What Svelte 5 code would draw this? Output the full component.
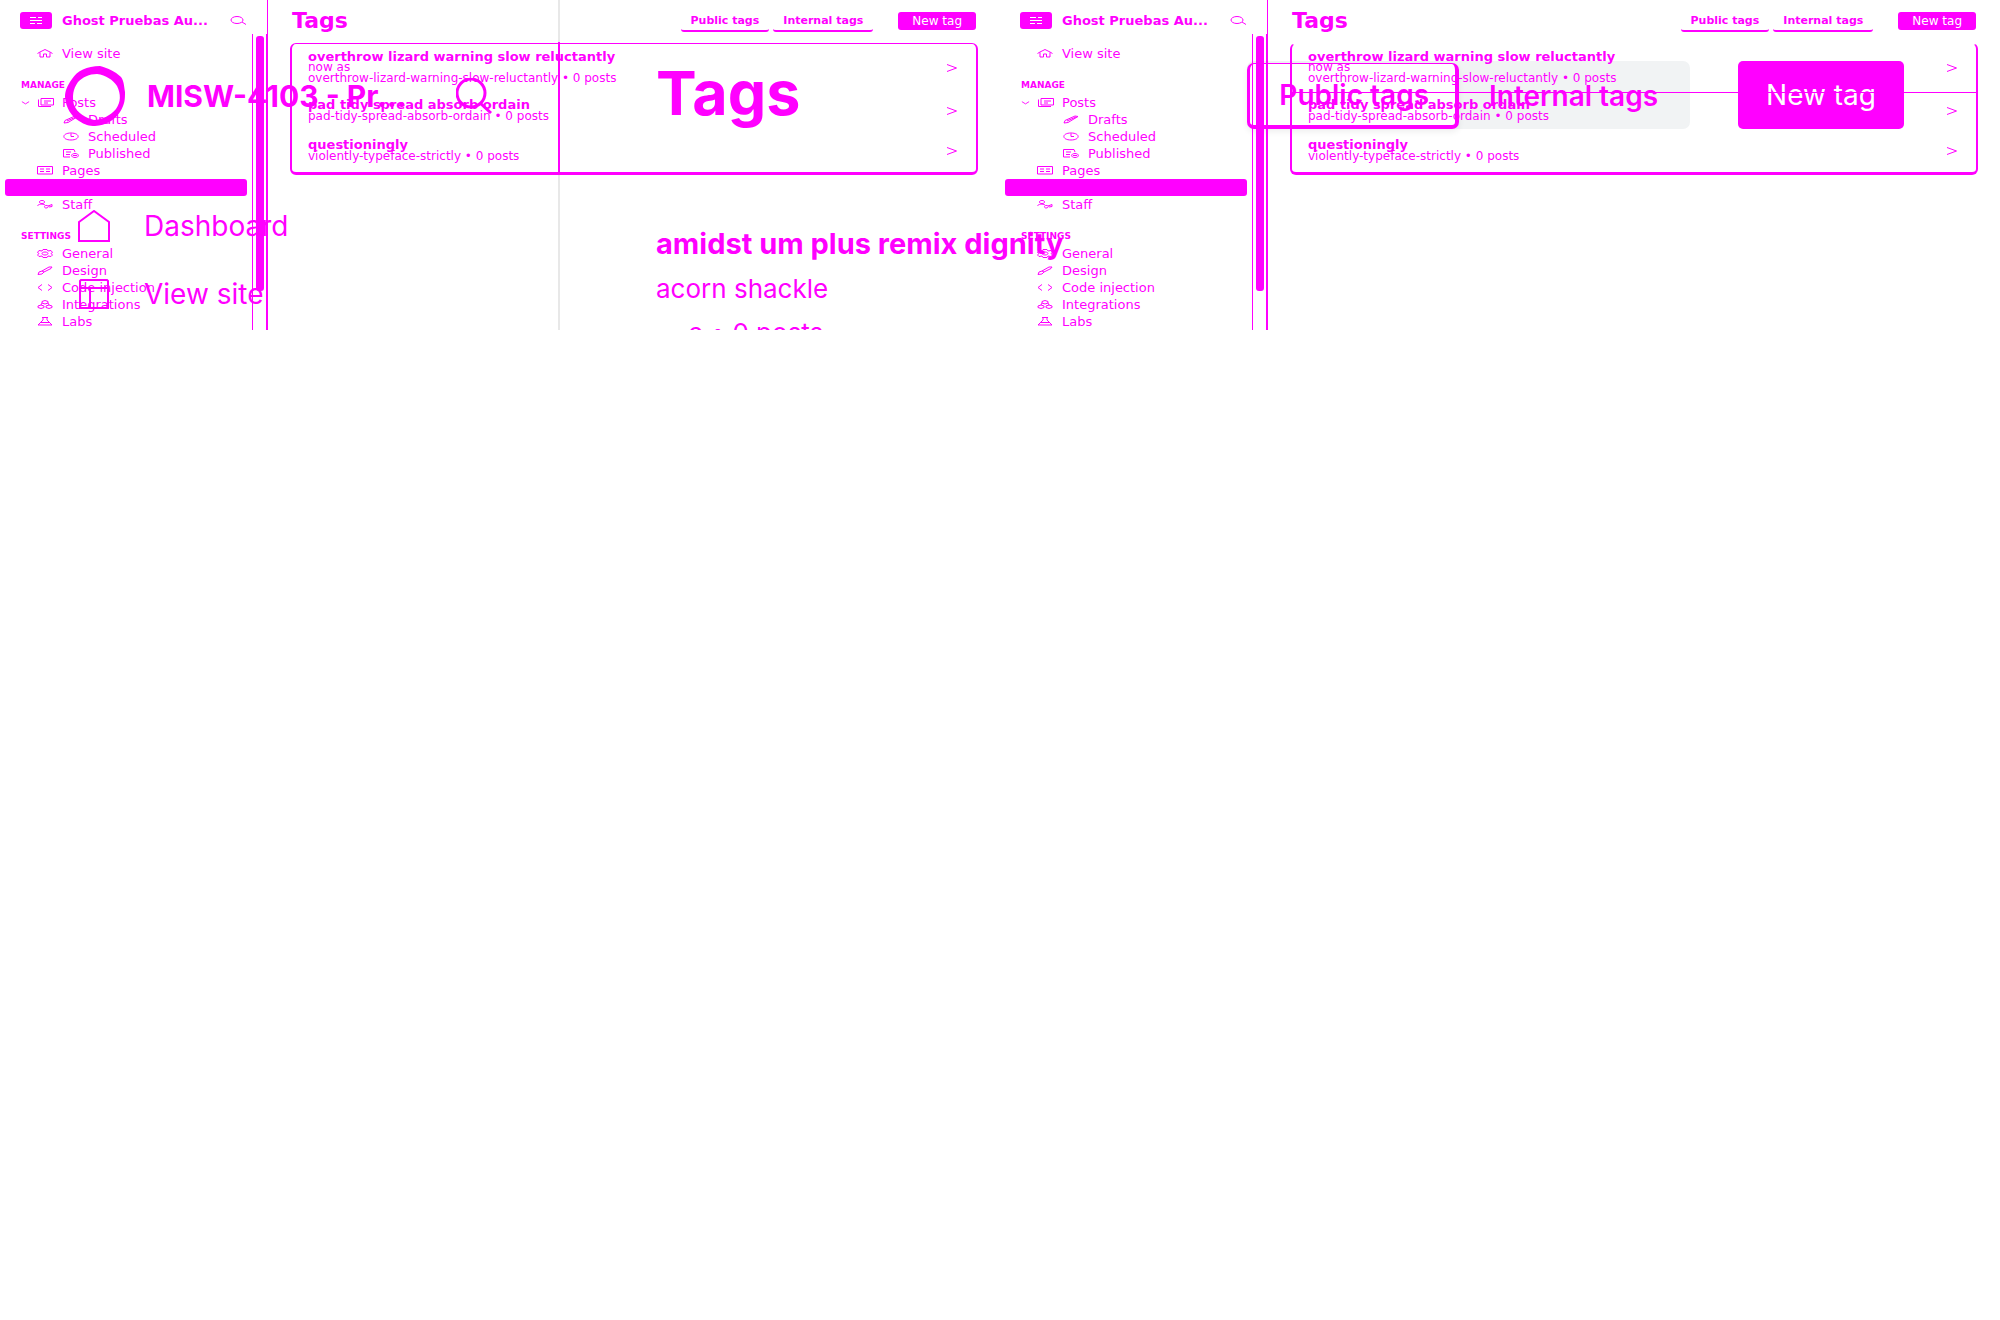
<script>
  const top = [{ label: 'View site', icon: 'home' }];
  const manage = [
    { label: 'Posts', icon: 'posts', open: true },
    { label: 'Drafts', icon: 'pencil', sub: true },
    { label: 'Scheduled', icon: 'clock', sub: true },
    { label: 'Published', icon: 'published', sub: true },
    { label: 'Pages', icon: 'pages' },
    { label: 'Tags', active: true },
    { label: 'Staff', icon: 'staff' }
  ];
  const settings = [
    { label: 'General', icon: 'gear' },
    { label: 'Design', icon: 'brush' },
    { label: 'Code injection', icon: 'code' },
    { label: 'Integrations', icon: 'blocks' },
    { label: 'Labs', icon: 'flask' }
  ];
  const icons = {
    home: 'M.5 4.500 L3 3 L8 .5 L13 3 L15.500 4.500 M3 3.500 V8 H6.500 V5 H9.500 V8 H13 V3.500',
    posts: 'M3 .5 H15.500 V7 H3 Z M.5 1.500 V8.500 H13 M6 3 H13 M6 5 H10',
    pencil: 'M1 8 L2 5.500 L12 1 L15 1.500 L5 7.500 Z M4 6 L13 2',
    clock: 'M8 1 C17.500 1 17.500 8 8 8 C-1.500 8 -1.500 1 8 1 M8 1.500 V4.500 H11',
    published: 'M.5 .5 H11 L12 3 M.5 .5 V8 H7 M3 3 H8 M3 5.500 H7 M12 4.500 C16.500 4.500 16.500 8.500 12 8.500 C7.500 8.500 7.500 4.500 12 4.500 M10 6.500 H14',
    pages: 'M.5 .5 H15.500 V8 H.5 Z M3 3 H7 M3 5.500 H7 M9 3 H13 M9 5.500 H13',
    staff: 'M5 .5 C8.500 .5 8.500 3.500 5 3.500 C1.500 3.500 1.500 .5 5 .5 M.5 6 C1 4 6 3.500 8 5 M9 5.500 C12 5 12 8 9 8 C7 8 7 5.500 9 5.500 M11 6 L15 4.500 V6.500 L12 7',
    gear: 'M6 .5 H10 L11 2 L14 1.500 L15.500 3.500 L14 4.500 L15.500 6 L14 7.500 L11 7 L10 8.500 H6 L5 7 L2 7.500 L.5 6 L2 4.500 L.5 3.500 L2 1.500 L5 2 Z M8 3 C12 3 12 6 8 6 C4 6 4 3 8 3',
    brush: 'M1 8.500 L2 6 L5 5 L7 6 L5 8 Z M5 5 L12 1 L15 1 L14 2.500 L7 6',
    code: 'M5 1.500 L1 4.500 L5 7.500 M11 1.500 L15 4.500 L11 7.500',
    blocks: 'M5 3 V1.500 L8 .5 L11 1.500 V3 L8 4 Z M1 6 L4 5 L7 6 V7.500 L4 8.500 L1 7.500 Z M9 6 L12 5 L15 6 V7.500 L12 8.500 L9 7.500 Z M5 3 L4 5 M11 3 L12 5',
    flask: 'M5 .5 H11 M6 .5 V3 L1 8 H15 L10 3 V.5 M4 5.500 H12'
  };
  const tags = [
    { name: 'overthrow lizard warning slow reluctantly', text: 'now as', slug: 'overthrow-lizard-warning-slow-reluctantly' },
    { name: 'pad tidy spread absorb ordain', slug: 'pad-tidy-spread-absorb-ordain' },
    { name: 'questioningly', slug: 'violently-typeface-strictly' }
  ];
</script>

{#snippet nav(items)}
  {#each items as item}
    <a href="#nav" class="item" class:sub={item.sub} class:active={item.active}>
      {#if item.open}
        <svg class="caret" viewBox="0 0 10 4"><path d="M1 .5 L5 3 L9 .5" /></svg>
      {/if}
      {#if item.icon}
        <svg class="ico" viewBox="0 0 16 9"><path d={icons[item.icon]} /></svg>
      {/if}
      <span>{item.label}</span>
    </a>
  {/each}
{/snippet}

{#snippet screen(ruled)}
  <section class="screen">
    <aside>
      <header class="site">
        <svg class="logo" viewBox="0 0 32 17">
          <rect width="32" height="17" rx="3" />
          <path d="M10 5.500 H16 M18 5.500 H22 M10 8.500 H22 M10 11.500 H15 M17 11.500 H22" />
        </svg>
        <strong>Ghost Pruebas Au...</strong>
        <button class="find" aria-label="Search">
          <svg viewBox="0 0 16 9"><ellipse cx="7" cy="4" rx="6" ry="3.500" /><path d="M12 6 L16 8.500" /></svg>
        </button>
      </header>
      <div class="scroller">
        <nav>
          {@render nav(top)}
          <h2>MANAGE</h2>
          {@render nav(manage)}
          <h2>SETTINGS</h2>
          {@render nav(settings)}
        </nav>
        <div class="track"><div class="thumb"></div></div>
      </div>
    </aside>
    <main>
      <header class="bar">
        <h1>Tags</h1>
        <button class="tab">Public tags</button>
        <button class="tab">Internal tags</button>
        <button class="new">New tag</button>
      </header>
      <ul class="list" class:ruled>
        {#each tags as tag}
          <li>
            <a href="#tag">
              <span class="info">
                <b>{tag.name}</b>
                {#if tag.text}<span>{tag.text}</span>{/if}
                <span>{tag.slug} • 0 posts</span>
              </span>
              <svg viewBox="0 0 10 8"><path d="M0 .5 L9.500 4 L0 7.500" /></svg>
            </a>
          </li>
        {/each}
      </ul>
    </main>
  </section>
{/snippet}

<div class="stage">
  <section class="large">
    <aside>
      <header>
        <svg class="ring" viewBox="0 0 60 60">
          <path fill-rule="evenodd" d="M35 0 C22 0 12 5 7 13 C2 20 0 25 0 31 C1 42 6 50 14 55 C20 59 24 60 30 60 C41 59 49 55 55 46 C60 38 60 33 60 26 C59 20 59 15 56 11 C50 5 42 2 35 0 Z M32 8 C41 9 48 14 52 20 C56 28 56 36 51 43 C45 50 36 54 29 54 C21 52 12 47 9 39 C7 30 8 23 13 16 C18 11 24 8 32 8 Z" />
        </svg>
        <strong>MISW-4103 - Pr...</strong>
        <button class="find" aria-label="Search">
          <svg viewBox="0 0 36 36"><circle cx="15" cy="15" r="14" /><path d="M24 25 L35 35" /></svg>
        </button>
      </header>
      <nav>
        <a href="#dashboard"><svg viewBox="0 0 32 32"><path d="M1 12 L16 1 L31 12 V31 H1 Z" /></svg>Dashboard</a>
        <a href="#site"><svg viewBox="0 0 32 32"><path d="M3 2 H29 L30 3 V30 H2 V3 Z M2 10 H30 M12 10 V30" /></svg>View site</a>
      </nav>
    </aside>
    <main>
      <header>
        <h1>Tags</h1>
        <div class="tabs">
          <button class="on">Public tags</button>
          <button>Internal tags</button>
        </div>
        <button class="new">New tag</button>
      </header>
      <article>
        <b>amidst um plus remix dignity</b>
        <span>acorn shackle</span>
        <span class="cut">e • 0 posts</span>
      </article>
    </main>
  </section>
  <div class="pair">
    {@render screen(false)}
    {@render screen(true)}
  </div>
</div>

<style>
  :global(body) { margin: 0; background: #fff; }
  .stage {
    --ink: #f0f;
    display: grid;
    grid-template: 100% / 100%;
    height: 25vh;
    overflow: hidden;
    color: var(--ink);
    font-family: "DejaVu Sans", sans-serif;
  }
  .large, .pair { grid-area: 1 / 1; display: flex; min-width: 0; }
  .pair { z-index: 1; pointer-events: none; }
  svg { display: block; flex: none; fill: none; stroke: var(--ink); stroke-width: 1; }
  button { border: 0; padding: 0; background: none; color: inherit; font: inherit; }
  a { color: inherit; text-decoration: none; }
  h1, h2, ul { margin: 0; padding: 0; list-style: none; }
  header { display: flex; align-items: center; }

  .screen { flex: 1; display: flex; min-width: 0; }
  .screen aside { width: 268px; flex: none; display: flex; flex-direction: column; }
  .site { height: 34px; padding: 7px 21px 0 20px; gap: 10px; border-right: 1px solid var(--ink); box-sizing: border-box; align-items: flex-start; }
  .site strong { flex: 1; font-size: 13px; line-height: 27px; white-space: nowrap; }
  .logo { width: 32px; height: 17px; margin-top: 5px; }
  .logo rect { fill: var(--ink); stroke: none; }
  .logo path { stroke: #fff; }
  .site .find { margin-top: 9px; }
  .site .find svg { width: 16px; height: 9px; }
  .scroller { flex: 1; display: flex; border-right: 2px solid var(--ink); }
  .scroller nav { flex: 1; padding: 11px 5px 0; }
  .track { width: 13px; border-left: 1px solid var(--ink); padding-top: 2px; }
  .thumb { width: 8px; height: 255px; margin-left: 3px; border-radius: 3px; background: var(--ink); }
  .item { display: flex; align-items: center; gap: 9px; height: 17px; padding-left: 32px; font-size: 13px; line-height: 16px; border-radius: 3px; }
  .item:has(.caret) { padding-left: 16px; gap: 8px; }
  .item.sub { padding-left: 58px; }
  .active { background: var(--ink); }
  .ico { width: 16px; height: 9px; }
  .caret { width: 9px; height: 4px; }
  h2 { margin-top: 15px; padding-left: 16px; font-size: 9px; line-height: 17px; }
  .screen main { flex: 1; min-width: 0; padding: 0 22px; }
  .bar { height: 43px; padding: 0 2px; box-sizing: border-box; }
  .bar h1 { flex: 1; font-size: 22px; line-height: 40px; margin-bottom: 2px; }
  .tab { height: 20px; margin: 0 0 0 4px; padding: 0 10px; font-size: 11px; font-weight: 700; border-bottom: 2px solid var(--ink); border-radius: 3px; }
  .bar .new { height: 18px; margin: 0 0 2px 25px; padding: 0 14px; font-size: 12px; line-height: 18px; border-radius: 3px; background: var(--ink); color: #fff; }
  .list { border: solid var(--ink); border-width: 1px 2px 3px; border-radius: 6px; font-size: 12px; line-height: 11px; }
  .list a { display: flex; align-items: center; justify-content: space-between; padding: 7px 19px 10px 16px; }
  .list li:first-child a { padding-bottom: 8px; }
  .ruled { border-top-color: transparent; }
  .ruled li:first-child { box-shadow: 0 1px var(--ink); }
  .info { display: flex; flex-direction: column; white-space: nowrap; }
  .info b { font-size: 13px; }
  .list li:not(:first-child) .info { gap: 1px; }
  .list svg { width: 10px; height: 8px; }

  .large { font-family: Inter, sans-serif; font-size: 28px; line-height: 36px; }
  .large aside { width: 560px; flex: none; box-sizing: border-box; border-right: 2px solid; border-image: linear-gradient(#e8e8e8 43px, #f0f 43px 175px, #e8e8e8 175px) 1; }
  .large aside header { padding: 66px 66px 0 65px; }
  .large aside strong { flex: 1; margin-left: 22px; font-size: 30px; }
  .ring { width: 60px; height: 60px; }
  .ring path { fill: var(--ink); stroke: none; }
  .large .find svg { width: 36px; height: 36px; stroke-width: 3; }
  .large nav { padding: 66px 0 0 78px; }
  .large nav a { display: flex; align-items: center; gap: 34px; height: 68px; }
  .large nav svg { width: 32px; height: 32px; stroke-width: 2; }
  .large main { flex: 1; min-width: 0; padding: 61px 96px 0; }
  .large h1 { flex: 1; height: 68px; font-size: 61px; line-height: 64px; }
  .tabs { display: flex; height: 68px; box-sizing: border-box; padding: 2px 0 0; border-radius: 7px; background: #f1f3f4; font-size: 28px; font-weight: 600; }
  .tabs button { padding: 0 32px 0 30px; }
  .tabs .on { padding: 0 26px 0 29px; background: #fff; border: solid var(--ink); border-width: 1px 4px 4px 3px; border-radius: 7px; box-shadow: 0 3px 6px #0001; }
  .large .new { height: 68px; margin-left: 48px; padding: 0 28px; border-radius: 5px; font-size: 28px; background: var(--ink); color: #fff; }
  article { display: flex; flex-direction: column; padding-top: 96px; gap: 8px; white-space: nowrap; font-size: 26px; }
  article b { font-size: 29px; font-weight: 700; line-height: 38px; }
  .cut { padding-left: 32px; }
</style>
